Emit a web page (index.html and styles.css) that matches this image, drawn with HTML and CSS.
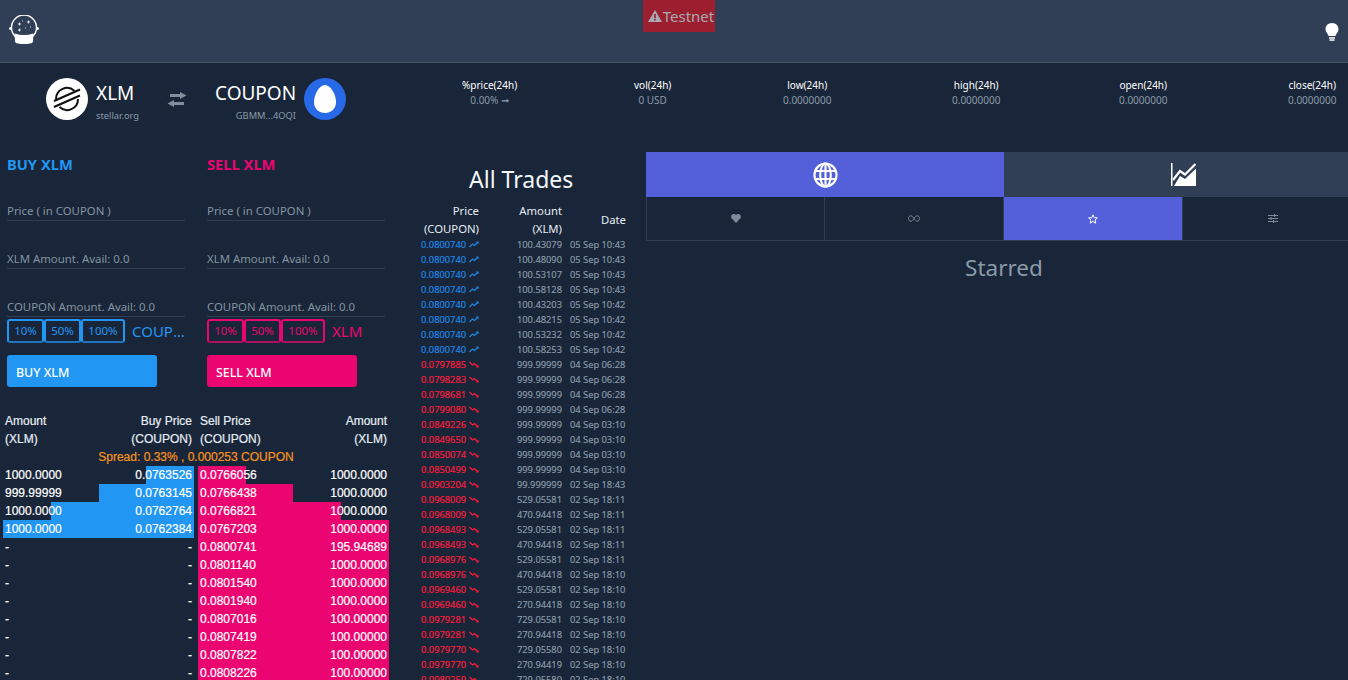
FILE: index.html
```html
<!DOCTYPE html>
<html lang="en">
<head>
  <meta charset="UTF-8" />
  <title>Testnet Exchange XLM / COUPON</title>
  <link rel="stylesheet" href="styles.css">
</head>
<body>
  <svg class="defs" width="0" height="0">
    <symbol id="up" viewBox="0 0 10 7"><path d="M0.5 6 L3.5 3 L5.5 4.5 L8.8 1.2" fill="none" stroke="currentColor" stroke-width="1.2"/><path d="M6.8 0.6 H9.6 V3.4 Z" fill="currentColor"/></symbol>
    <symbol id="down" viewBox="0 0 10 7"><path d="M0.5 1 L3.5 4 L5.5 2.5 L8.8 5.8" fill="none" stroke="currentColor" stroke-width="1.2"/><path d="M6.8 6.4 H9.6 V3.6 Z" fill="currentColor"/></symbol>
  </svg>

  <div class="page">
    <div class="topbar">
      <svg class="logo" width="30" height="30" viewBox="0 0 30 30">
        <circle cx="15" cy="12.5" r="12.5" fill="none" stroke="#fff" stroke-width="1.4"/>
        <rect x="0" y="12" width="3" height="3" rx="1.5" fill="#fff"/>
        <rect x="27" y="12" width="3" height="3" rx="1.5" fill="#fff"/>
        <path d="M5.5 18.5 Q15 21.5 24.5 18.5 L24 26 Q24 28 21 28.5 Q15 29.5 9 28.5 Q6 28 6 26 Z" fill="#fff"/>
        <path d="M9 9h3M10.5 7.5v3M18 7h3M19.5 5.5v3M9 15h3M10.5 13.5v3M16 13h1M21 12h1M13 6h1" stroke="#fff" stroke-width="0.8"/>
      </svg>
      <div class="testnet">
        <svg width="14" height="12" viewBox="0 0 14 12"><path d="M7 0 L14 12 H0 Z M6.2 4 V8.2 H7.8 V4 Z M6.2 9 V10.4 H7.8 V9 Z" fill-rule="evenodd" fill="currentColor"/></svg>Testnet
      </div>
      <svg class="bulb" width="14" height="18" viewBox="0 0 14 18">
        <path d="M7 0 C3 0 0.5 2.8 0.5 6.2 C0.5 9.2 3 10.6 3.6 13 H10.4 C11 10.6 13.5 9.2 13.5 6.2 C13.5 2.8 11 0 7 0 Z" fill="#fff"/>
        <rect x="4" y="14.2" width="6" height="1.5" fill="#fff"/><rect x="4.5" y="16.3" width="5" height="1.5" fill="#fff"/>
      </svg>
    </div>

    <div class="market">
      <div class="pair">
        <div class="asset">
          <svg width="42" height="42" viewBox="0 0 42 42">
            <circle cx="21" cy="21" r="21" fill="#fff"/>
            <path d="M10 21 A11 11 0 0 1 28.5 12.9 M32 21 A11 11 0 0 1 13.5 29.1" fill="none" stroke="#111" stroke-width="2"/>
            <path d="M8 23 L34 11.5 M8 29 L34 17.5" fill="none" stroke="#111" stroke-width="2.2"/>
          </svg>
          <div class="asset-text">
            <div class="asset-code">XLM</div>
            <div class="asset-issuer">stellar.org</div>
          </div>
        </div>
        <svg class="swap" width="20" height="15" viewBox="0 0 20 15">
          <path d="M3 2 H13 V0 L19.5 3.5 L13 7 V5 H3 Z M17 10 H7 V8 L0.5 11.5 L7 15 V13 H17 Z" fill="#7f8f9c"/>
        </svg>
        <div class="asset">
          <div class="asset-text right">
            <div class="asset-code">COUPON</div>
            <div class="asset-issuer">GBMM...4OQI</div>
          </div>
          <svg width="42" height="42" viewBox="0 0 42 42">
            <circle cx="21" cy="21" r="21" fill="#2869e8"/>
            <path d="M21 7 C27 7 32 17 32 24 C32 31 27 35 21 35 C15 35 10 31 10 24 C10 17 15 7 21 7 Z" fill="#fff"/>
          </svg>
        </div>
      </div>
      <div class="stats">
        <div class="stat"><div class="stat-name">%price(24h)</div><div class="stat-val">0.00% ➞</div></div>
        <div class="stat"><div class="stat-name">vol(24h)</div><div class="stat-val">0 USD</div></div>
        <div class="stat"><div class="stat-name">low(24h)</div><div class="stat-val">0.0000000</div></div>
        <div class="stat"><div class="stat-name">high(24h)</div><div class="stat-val">0.0000000</div></div>
        <div class="stat"><div class="stat-name">open(24h)</div><div class="stat-val">0.0000000</div></div>
        <div class="stat"><div class="stat-name">close(24h)</div><div class="stat-val">0.0000000</div></div>
      </div>
    </div>

    <div class="main">
      <div class="left">
        <div class="forms">
          <div class="form buy">
            <div class="form-title">BUY XLM</div>
            <div class="field first">Price ( in COUPON )</div>
            <div class="field">XLM Amount. Avail: 0.0</div>
            <div class="field">COUPON Amount. Avail: 0.0</div>
            <div class="pct-row">
              <div class="pct"><span>10%</span><span>50%</span><span>100%</span></div>
              <div class="pct-unit">COUPON</div>
            </div>
            <div class="submit">BUY XLM</div>
          </div>
          <div class="form sell">
            <div class="form-title">SELL XLM</div>
            <div class="field first">Price ( in COUPON )</div>
            <div class="field">XLM Amount. Avail: 0.0</div>
            <div class="field">COUPON Amount. Avail: 0.0</div>
            <div class="pct-row">
              <div class="pct"><span>10%</span><span>50%</span><span>100%</span></div>
              <div class="pct-unit">XLM</div>
            </div>
            <div class="submit">SELL XLM</div>
          </div>
        </div>

        <div class="book">
          <div class="book-head">
            <div class="book-row"><span>Amount</span><span>Buy Price</span></div>
            <div class="book-row"><span>Sell Price</span><span>Amount</span></div>
            <div class="book-row"><span>(XLM)</span><span>(COUPON)</span></div>
            <div class="book-row"><span>(COUPON)</span><span>(XLM)</span></div>
          </div>
          <div class="spread">Spread: 0.33% , 0.000253 COUPON</div>
          <div class="book-body">
            <div class="book-side bids">
              <div class="book-row"><i class="depth" style="width:48px"></i><span>1000.0000</span><span>0.0763526</span></div>
              <div class="book-row"><i class="depth" style="width:95px"></i><span>999.99999</span><span>0.0763145</span></div>
              <div class="book-row"><i class="depth" style="width:143px"></i><span>1000.0000</span><span>0.0762764</span></div>
              <div class="book-row"><i class="depth" style="width:191px"></i><span>1000.0000</span><span>0.0762384</span></div>
              <div class="book-row"><span>-</span><span>-</span></div>
              <div class="book-row"><span>-</span><span>-</span></div>
              <div class="book-row"><span>-</span><span>-</span></div>
              <div class="book-row"><span>-</span><span>-</span></div>
              <div class="book-row"><span>-</span><span>-</span></div>
              <div class="book-row"><span>-</span><span>-</span></div>
              <div class="book-row"><span>-</span><span>-</span></div>
              <div class="book-row"><span>-</span><span>-</span></div>
            </div>
            <div class="book-side asks">
              <div class="book-row"><i class="depth" style="width:48px"></i><span>0.0766056</span><span>1000.0000</span></div>
              <div class="book-row"><i class="depth" style="width:95px"></i><span>0.0766438</span><span>1000.0000</span></div>
              <div class="book-row"><i class="depth" style="width:143px"></i><span>0.0766821</span><span>1000.0000</span></div>
              <div class="book-row"><i class="depth" style="width:191px"></i><span>0.0767203</span><span>1000.0000</span></div>
              <div class="book-row"><i class="depth" style="width:191px"></i><span>0.0800741</span><span>195.94689</span></div>
              <div class="book-row"><i class="depth" style="width:191px"></i><span>0.0801140</span><span>1000.0000</span></div>
              <div class="book-row"><i class="depth" style="width:191px"></i><span>0.0801540</span><span>1000.0000</span></div>
              <div class="book-row"><i class="depth" style="width:191px"></i><span>0.0801940</span><span>1000.0000</span></div>
              <div class="book-row"><i class="depth" style="width:191px"></i><span>0.0807016</span><span>100.00000</span></div>
              <div class="book-row"><i class="depth" style="width:191px"></i><span>0.0807419</span><span>100.00000</span></div>
              <div class="book-row"><i class="depth" style="width:191px"></i><span>0.0807822</span><span>100.00000</span></div>
              <div class="book-row"><i class="depth" style="width:191px"></i><span>0.0808226</span><span>100.00000</span></div>
            </div>
          </div>
        </div>
      </div>

      <div class="trades">
        <div class="trades-title">All Trades</div>
        <div class="trades-head">
          <div>Price<br>(COUPON)</div>
          <div>Amount<br>(XLM)</div>
          <div>Date</div>
        </div>
        <div class="trade t-up"><div class="t-price">0.0800740<svg><use href="#up"/></svg></div><div class="t-amt">100.43079</div><div class="t-date">05 Sep 10:43</div></div>
        <div class="trade t-up"><div class="t-price">0.0800740<svg><use href="#up"/></svg></div><div class="t-amt">100.48090</div><div class="t-date">05 Sep 10:43</div></div>
        <div class="trade t-up"><div class="t-price">0.0800740<svg><use href="#up"/></svg></div><div class="t-amt">100.53107</div><div class="t-date">05 Sep 10:43</div></div>
        <div class="trade t-up"><div class="t-price">0.0800740<svg><use href="#up"/></svg></div><div class="t-amt">100.58128</div><div class="t-date">05 Sep 10:43</div></div>
        <div class="trade t-up"><div class="t-price">0.0800740<svg><use href="#up"/></svg></div><div class="t-amt">100.43203</div><div class="t-date">05 Sep 10:42</div></div>
        <div class="trade t-up"><div class="t-price">0.0800740<svg><use href="#up"/></svg></div><div class="t-amt">100.48215</div><div class="t-date">05 Sep 10:42</div></div>
        <div class="trade t-up"><div class="t-price">0.0800740<svg><use href="#up"/></svg></div><div class="t-amt">100.53232</div><div class="t-date">05 Sep 10:42</div></div>
        <div class="trade t-up"><div class="t-price">0.0800740<svg><use href="#up"/></svg></div><div class="t-amt">100.58253</div><div class="t-date">05 Sep 10:42</div></div>
        <div class="trade t-down"><div class="t-price">0.0797885<svg><use href="#down"/></svg></div><div class="t-amt">999.99999</div><div class="t-date">04 Sep 06:28</div></div>
        <div class="trade t-down"><div class="t-price">0.0798283<svg><use href="#down"/></svg></div><div class="t-amt">999.99999</div><div class="t-date">04 Sep 06:28</div></div>
        <div class="trade t-down"><div class="t-price">0.0798681<svg><use href="#down"/></svg></div><div class="t-amt">999.99999</div><div class="t-date">04 Sep 06:28</div></div>
        <div class="trade t-down"><div class="t-price">0.0799080<svg><use href="#down"/></svg></div><div class="t-amt">999.99999</div><div class="t-date">04 Sep 06:28</div></div>
        <div class="trade t-down"><div class="t-price">0.0849226<svg><use href="#down"/></svg></div><div class="t-amt">999.99999</div><div class="t-date">04 Sep 03:10</div></div>
        <div class="trade t-down"><div class="t-price">0.0849650<svg><use href="#down"/></svg></div><div class="t-amt">999.99999</div><div class="t-date">04 Sep 03:10</div></div>
        <div class="trade t-down"><div class="t-price">0.0850074<svg><use href="#down"/></svg></div><div class="t-amt">999.99999</div><div class="t-date">04 Sep 03:10</div></div>
        <div class="trade t-down"><div class="t-price">0.0850499<svg><use href="#down"/></svg></div><div class="t-amt">999.99999</div><div class="t-date">04 Sep 03:10</div></div>
        <div class="trade t-down"><div class="t-price">0.0903204<svg><use href="#down"/></svg></div><div class="t-amt">99.999999</div><div class="t-date">02 Sep 18:43</div></div>
        <div class="trade t-down"><div class="t-price">0.0968009<svg><use href="#down"/></svg></div><div class="t-amt">529.05581</div><div class="t-date">02 Sep 18:11</div></div>
        <div class="trade t-down"><div class="t-price">0.0968009<svg><use href="#down"/></svg></div><div class="t-amt">470.94418</div><div class="t-date">02 Sep 18:11</div></div>
        <div class="trade t-down"><div class="t-price">0.0968493<svg><use href="#down"/></svg></div><div class="t-amt">529.05581</div><div class="t-date">02 Sep 18:11</div></div>
        <div class="trade t-down"><div class="t-price">0.0968493<svg><use href="#down"/></svg></div><div class="t-amt">470.94418</div><div class="t-date">02 Sep 18:11</div></div>
        <div class="trade t-down"><div class="t-price">0.0968976<svg><use href="#down"/></svg></div><div class="t-amt">529.05581</div><div class="t-date">02 Sep 18:11</div></div>
        <div class="trade t-down"><div class="t-price">0.0968976<svg><use href="#down"/></svg></div><div class="t-amt">470.94418</div><div class="t-date">02 Sep 18:10</div></div>
        <div class="trade t-down"><div class="t-price">0.0969460<svg><use href="#down"/></svg></div><div class="t-amt">529.05581</div><div class="t-date">02 Sep 18:10</div></div>
        <div class="trade t-down"><div class="t-price">0.0969460<svg><use href="#down"/></svg></div><div class="t-amt">270.94418</div><div class="t-date">02 Sep 18:10</div></div>
        <div class="trade t-down"><div class="t-price">0.0979281<svg><use href="#down"/></svg></div><div class="t-amt">729.05581</div><div class="t-date">02 Sep 18:10</div></div>
        <div class="trade t-down"><div class="t-price">0.0979281<svg><use href="#down"/></svg></div><div class="t-amt">270.94418</div><div class="t-date">02 Sep 18:10</div></div>
        <div class="trade t-down"><div class="t-price">0.0979770<svg><use href="#down"/></svg></div><div class="t-amt">729.05580</div><div class="t-date">02 Sep 18:10</div></div>
        <div class="trade t-down"><div class="t-price">0.0979770<svg><use href="#down"/></svg></div><div class="t-amt">270.94419</div><div class="t-date">02 Sep 18:10</div></div>
        <div class="trade t-down"><div class="t-price">0.0980259<svg><use href="#down"/></svg></div><div class="t-amt">729.05580</div><div class="t-date">02 Sep 18:10</div></div>
      </div>

      <div class="right">
        <div class="tabs">
          <div class="tab active">
            <svg width="25" height="26" viewBox="0 0 26 26" preserveAspectRatio="none" fill="none" stroke="#fff" stroke-width="2.2">
              <circle cx="13" cy="13" r="11.5"/>
              <ellipse cx="13" cy="13" rx="5.5" ry="11.5"/>
              <path d="M13 1.5 V24.5 M2 9 H24 M2 17 H24"/>
            </svg>
          </div>
          <div class="tab">
            <svg width="25" height="23" viewBox="0 0 25 23">
              <rect width="1.5" height="23" fill="#fff"/>
              <path d="M3 23 L9 13 L14 16 L25 5.5 V23 Z" fill="#fff"/>
              <path d="M2 17 L9 8 L14 11.5 L24.5 1" fill="none" stroke="#fff" stroke-width="2.2"/>
            </svg>
          </div>
        </div>
        <div class="subtabs">
          <div class="subtab">
            <svg width="10" height="9" viewBox="0 0 10 9"><path d="M5 9 L0.8 4.6 C-0.8 2.6 0.5 0 2.8 0 C3.8 0 4.6 0.6 5 1.2 C5.4 0.6 6.2 0 7.2 0 C9.5 0 10.8 2.6 9.2 4.6 Z" fill="#7c8c9a"/></svg>
          </div>
          <div class="subtab">
            <svg width="12" height="7" viewBox="0 0 12 7"><path d="M6 3.5 C4.8 1.6 3.8 0.8 2.8 0.8 C1.4 0.8 0.6 2 0.6 3.5 C0.6 5 1.4 6.2 2.8 6.2 C3.8 6.2 4.8 5.4 6 3.5 C7.2 1.6 8.2 0.8 9.2 0.8 C10.6 0.8 11.4 2 11.4 3.5 C11.4 5 10.6 6.2 9.2 6.2 C8.2 6.2 7.2 5.4 6 3.5 Z" fill="none" stroke="#7c8c9a"/></svg>
          </div>
          <div class="subtab active">
            <svg width="10" height="10" viewBox="0 0 10 10"><path d="M5 0.8 L6.2 3.7 L9.4 3.9 L7 6 L7.8 9.2 L5 7.5 L2.2 9.2 L3 6 L0.6 3.9 L3.8 3.7 Z" fill="none" stroke="#fff"/></svg>
          </div>
          <div class="subtab">
            <svg width="10" height="9" viewBox="0 0 10 9"><path d="M0 1.5 H10 M0 4.5 H10 M0 7.5 H10 M6.5 0 V3 M3 3 V6 M5.5 6 V9" stroke="#7c8c9a" fill="none"/></svg>
          </div>
        </div>
        <div class="panel-title">Starred</div>
      </div>
    </div>
  </div>
</body>
</html>
```

FILE: styles.css
```css
body {
  margin: 0;
  padding: 0;
  background: #192538;
  color: #fff;
  font-family: "Noto Sans", "Open Sans", sans-serif;
}
.defs {
  position: absolute;
}
.page {
  height: 680px;
  overflow: hidden;
}

/* top bar */
.topbar {
  height: 62px;
  background: #303f56;
  border-bottom: 1px solid #47556a;
  display: grid;
  grid-template-columns: 643px 72px 1fr;
}
.logo {
  margin: 15px 0 0 9px;
}
.testnet {
  height: 32px;
  padding-left: 4px;
  box-sizing: border-box;
  background: #9b1f2e;
  color: #a9a9b4;
  font-size: 15px;
  display: flex;
  align-items: center;
  justify-content: center;
  gap: 1px;
}
.bulb {
  justify-self: end;
  margin: 23px 9px 0 0;
}

/* pair and 24h stats */
.market {
  height: 89px;
  display: flex;
}
.pair {
  width: 462px;
  flex: none;
  padding: 15px 0 0 46px;
  box-sizing: border-box;
  display: flex;
  align-items: flex-start;
}
.asset {
  display: flex;
  gap: 8px;
}
.asset-text {
  width: 48px;
}
.asset-text.right {
  width: 81px;
  text-align: right;
}
.asset-code {
  font-size: 19px;
  line-height: 28px;
  margin-top: 1px;
}
.asset-issuer {
  font-size: 9.3px;
  line-height: 14px;
  margin-top: 2px;
  color: #8a9ba8;
  white-space: nowrap;
}
.swap {
  margin: 14px 28px 0 23px;
}
.stats {
  display: grid;
  grid-template-columns: 172px 149px 169px 167px 169px 47px;
  padding-top: 15px;
}
.stat {
  justify-self: start;
  text-align: center;
  font-size: 10px;
  line-height: 15px;
  white-space: nowrap;
}
.stat-val {
  color: #8a9ba8;
}

/* main columns */
.main {
  display: flex;
}
.left {
  width: 393px;
  flex: none;
}
.forms {
  display: flex;
}
.form {
  width: 200px;
  flex: none;
  padding-left: 7px;
  box-sizing: border-box;
}
.form.buy {
  --accent: #2196f3;
}
.form.sell {
  --accent: #eb0570;
}
.form-title {
  height: 24px;
  font-size: 14.7px;
  line-height: 24px;
  font-weight: 700;
  color: var(--accent);
}
.field {
  width: 178px;
  height: 48px;
  box-sizing: border-box;
  border-bottom: 1px solid #303f56;
  display: flex;
  align-items: flex-end;
  font-size: 11.4px;
  line-height: 18px;
  color: #8594a1;
  white-space: nowrap;
}
.field.first {
  height: 45px;
}
.pct-row {
  display: flex;
  align-items: center;
  margin-top: 2px;
  gap: 7px;
}
.pct {
  display: flex;
  height: 24px;
}
.pct span {
  box-sizing: border-box;
  width: 37px;
  border: 2px solid var(--accent);
  border-bottom-color: color-mix(in srgb, var(--accent) 70%, #192538);
  border-radius: 3px;
  font-size: 11.5px;
  line-height: 20px;
  text-align: center;
  color: var(--accent);
}
.pct span:last-child {
  width: 44px;
}
.pct-unit {
  width: 54px;
  font-size: 15px;
  color: var(--accent);
  white-space: nowrap;
  overflow: hidden;
  text-overflow: ellipsis;
}
.submit {
  width: 150px;
  height: 32px;
  margin-top: 12px;
  padding-left: 9px;
  box-sizing: border-box;
  background: var(--accent);
  border-radius: 3px;
  font-size: 12.4px;
  line-height: 35px;
  font-weight: 500;
}

/* order book */
.book {
  margin: 25px 0 0 3px;
  width: 386px;
  font-family: "Liberation Sans", Arial, sans-serif;
  font-size: 12px;
  line-height: 18px;
  -webkit-text-stroke: 0.2px;
}
.book-head {
  display: grid;
  grid-template-columns: 191px 191px;
  column-gap: 4px;
  color: #e6edf5;
}
.book-row {
  position: relative;
  height: 18px;
  padding: 0 2px;
  display: flex;
  justify-content: space-between;
  white-space: nowrap;
}
.book-row span {
  position: relative;
}
.spread {
  text-align: center;
  color: #f7941d;
}
.book-body {
  display: grid;
  grid-template-columns: 191px 191px;
  column-gap: 4px;
}
.depth {
  position: absolute;
  top: 0;
  bottom: 0;
}
.bids .depth {
  right: 0;
  background: #2196f3;
}
.asks .depth {
  left: 0;
  background: #eb0570;
}

/* trades */
.trades {
  width: 253px;
  flex: none;
}
.trades-title {
  height: 50px;
  line-height: 54px;
  padding-left: 76px;
  font-size: 23px;
  color: #f4f7fa;
}
.trades-head {
  display: grid;
  grid-template-columns: 86px 83px 64px;
  align-items: center;
  height: 35px;
  font-size: 11.3px;
  line-height: 18px;
  text-align: right;
  color: #e6edf5;
}
.trade {
  display: grid;
  grid-template-columns: 86px 83px 64px;
  height: 15px;
  font-size: 9.3px;
  line-height: 15px;
  white-space: nowrap;
  -webkit-text-stroke: 0.15px;
}
.t-price {
  display: flex;
  align-items: center;
  padding-left: 28px;
  gap: 3px;
}
.t-price svg {
  width: 10px;
  height: 7px;
}
.t-up .t-price {
  color: #1e88e5;
}
.t-down .t-price {
  color: #ff1c3d;
}
.t-amt {
  text-align: right;
  color: #8a9ba8;
}
.t-date {
  padding-left: 8px;
  color: #8a9ba8;
}

/* right panel runs past the window edge */
.right {
  width: 716px;
  flex: none;
}
.tabs {
  display: flex;
  height: 45px;
}
.tab {
  flex: 1;
  background: #303f56;
  display: flex;
  align-items: center;
  justify-content: center;
}
.tab.active,
.subtab.active {
  background: #525fd8;
}
.subtabs {
  display: flex;
  height: 44px;
  box-sizing: border-box;
  border-bottom: 1px solid #303f56;
}
.subtab {
  width: 179px;
  flex: none;
  box-sizing: border-box;
  border-right: 1px solid #303f56;
  display: flex;
  align-items: center;
  justify-content: center;
}
.subtab:first-child {
  border-left: 1px solid #303f56;
}
.subtab:last-child {
  border-right: 0;
}
.panel-title {
  text-align: center;
  font-size: 22.5px;
  line-height: 32px;
  margin-top: 11px;
  color: #8a9ba8;
}
```
